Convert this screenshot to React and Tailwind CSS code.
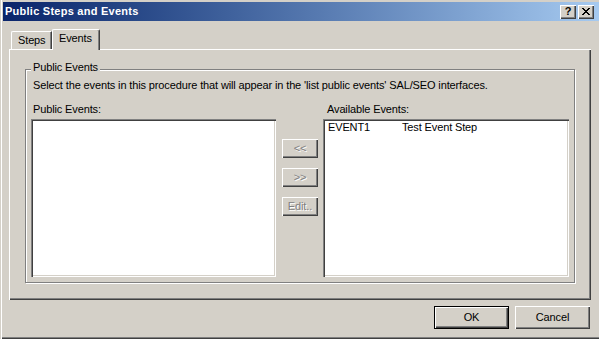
import React from 'react';

const raised = 'shadow-[inset_1px_1px_#fff,inset_-1px_-1px_#404040,inset_-2px_-2px_#808080]';
const sunken = 'shadow-[inset_1px_1px_#808080,inset_2px_2px_#404040,inset_-1px_-1px_#fff,inset_-2px_-2px_#d4d0c8]';

const CloseGlyph = () => {
  // 8x7 pixel cross, like the classic caption button
  const rows = ['11000011', '01100110', '00111100', '00011000', '00111100', '01100110', '11000011'];
  return (
    <svg width="8" height="7" viewBox="0 0 8 7" shapeRendering="crispEdges">
      {rows.map((r, y) =>
        r.split('').map((c, x) => (c === '1' ? <rect key={`${x}-${y}`} x={x} y={y} width="1" height="1" fill="#000" /> : null))
      )}
    </svg>
  );
};

const SideButton = ({ label }) => (
  <div className={`w-[36px] h-[19px] bg-[#d4d0c8] ${raised} flex items-center justify-center text-[#808080] [text-shadow:1px_1px_0_#fff]`}>
    {label}
  </div>
);

const App = () => {
  const available = [{ id: 'EVENT1', name: 'Test Event Step' }];

  return (
    <div className="w-[599px] h-[339px] overflow-hidden bg-[#d4d0c8] flex flex-col font-['Liberation_Sans',Arial,sans-serif] text-[11px] leading-[13px] tracking-[-0.13px] text-black shadow-[inset_1px_0_#d4d0c8,inset_2px_0_#fff,inset_0_-1px_#404040,inset_0_-2px_#808080]">
      {/* title bar */}
      <div className="ml-[3px] mt-[2px] h-[19px] flex items-center bg-linear-to-r from-[#0a246a] to-[#a6caf0] pl-[2px] pr-[5px]">
        <span className="flex-1 text-white font-bold tracking-[0.25px]">Public Steps and Events</span>
        <div className="flex gap-[2px]">
          <div className={`w-[16px] h-[14px] bg-[#d4d0c8] ${raised} flex items-center justify-center font-bold text-[11px] leading-none`}>?</div>
          <div className={`w-[16px] h-[14px] bg-[#d4d0c8] ${raised} flex items-center justify-center`}>
            <CloseGlyph />
          </div>
        </div>
      </div>

      <div className="flex-1 flex flex-col pl-[9px] pr-[8px] pt-[8px]">
        {/* tabs */}
        <div className="flex items-end h-[20px] pl-[2px]">
          <div className="w-[41px] h-[18px] border-l border-t border-white border-r border-r-[#404040] rounded-tl-[2px] shadow-[inset_-1px_0_#808080] pl-[6px] pt-[2px]">
            Steps
          </div>
          <div className="relative z-10 -mb-[1px] w-[48px] h-[21px] bg-[#d4d0c8] border-l border-t border-white border-r border-r-[#404040] rounded-tl-[2px] rounded-tr-[2px] shadow-[inset_-1px_0_#808080] pl-[6px] pt-[2px]">
            Events
          </div>
        </div>

        {/* tab panel */}
        <div className={`h-[251px] ${raised} pl-[16px] pt-[20px]`}>
          <div className="relative w-[550px] h-[214px] border border-[#808080] shadow-[inset_1px_1px_#fff,1px_1px_#fff]">
            <span className="absolute left-[5px] -top-[9px] px-[2px] bg-[#d4d0c8]">Public Events</span>
            <div className="pt-[9px] pl-[7px]">
              Select the events in this procedure that will appear in the 'list public events' SAL/SEO interfaces.
            </div>
            <div className="flex mt-[11px] pl-[5px]">
              <div className="w-[245px] flex flex-col">
                <div className="pl-[2px] mb-[3px]">Public Events:</div>
                <div className={`h-[158px] bg-white ${sunken}`}></div>
              </div>
              <div className="ml-[6px] pt-[36px] flex flex-col gap-[10px]">
                <SideButton label="<<" />
                <SideButton label=">>" />
                <SideButton label="Edit.." />
              </div>
              <div className="ml-[5px] w-[246px] flex flex-col">
                <div className="pl-[4px] mb-[3px]">Available Events:</div>
                <div className={`h-[158px] bg-white ${sunken} pt-[2px] pl-[5px]`}>
                  {available.map(ev => (
                    <div key={ev.id} className="flex">
                      <span className="w-[74px]">{ev.id}</span>
                      <span>{ev.name}</span>
                    </div>
                  ))}
                </div>
              </div>
            </div>
          </div>
        </div>

        {/* footer buttons */}
        <div className="flex justify-end gap-[6px] mt-[6px] pr-[1px]">
          <div className="w-[75px] h-[23px] border border-black">
            <div className={`w-full h-full bg-[#d4d0c8] ${raised} flex items-center justify-center`}>OK</div>
          </div>
          <div className={`w-[75px] h-[23px] bg-[#d4d0c8] ${raised} flex items-center justify-center`}>Cancel</div>
        </div>
      </div>
    </div>
  );
};

export default App;
